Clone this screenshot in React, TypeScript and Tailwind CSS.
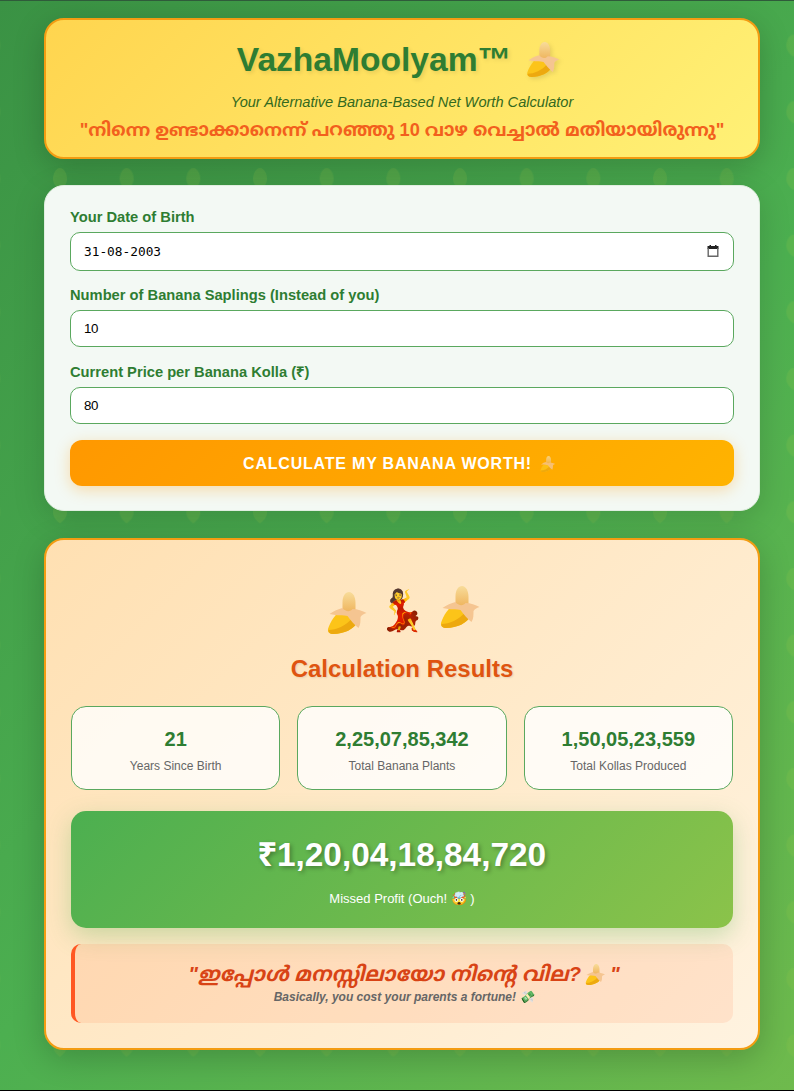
const sans = "font-['Liberation_Sans','Noto_Sans_Malayalam',Arial,sans-serif]";

function Banana({ className }: { className: string }) {
  return (
    <svg className={className} viewBox="0 0 40 42" aria-hidden="true">
      <defs>
        <linearGradient id="fruit" x1="0" y1="0" x2="0" y2="1">
          <stop offset="0%" stopColor="#f8dc9a" />
          <stop offset="100%" stopColor="#eeb158" />
        </linearGradient>
      </defs>
      <path d="M15 10C15 4 18 0 21.5 0C25.5 0 28 5 28 11V22H15Z" fill="url(#fruit)" />
      <path d="M0.5 37C3 29 8 22 14 18L30 30C27 37 16 42 6 42C2 42 0 40 0.5 37Z" fill="#fcc419" />
      <path d="M1 38C9 38 18 34 25 26L30 30C27 37 16 42 6 42C2 42 0.5 40 1 38Z" fill="#eda90f" />
      <path d="M2 22C6 19 11 17 15 16C18 20 23 20 25 17C30 17 35 19 39 21C36 22 34 23 33 25C33 29 33 33 31 36C27 33 23 28 20 24C16 23 10 24 2 22Z" fill="#f5c591" />
    </svg>
  );
}

function Field({
  label,
  value,
  className,
  children,
}: {
  label: string;
  value: string;
  className: string;
  children?: React.ReactNode;
}) {
  return (
    <div>
      <label className="mb-[6px] block text-[14.7px] leading-[17px] font-bold text-[#2e7d32]">{label}</label>
      <div className="relative">
        <input
          type="text"
          readOnly
          value={value}
          className={`block w-full rounded-[10px] border border-[#5aa85e] bg-white px-[13px] text-black outline-none ${className}`}
        />
        {children}
      </div>
    </div>
  );
}

function Stat({ value, label }: { value: string; label: string }) {
  return (
    <div className="flex h-[84px] flex-col items-center justify-center rounded-[15px] border border-[#5aa85e] bg-white/80 pt-[4px]">
      <div className="text-[20px] leading-[23px] font-bold text-[#2e7d32]">{value}</div>
      <div className="mt-[8px] text-[12px] leading-[14px] text-[#666]">{label}</div>
    </div>
  );
}

export default function App() {
  return (
    <div
      className={`${sans} relative h-[1091px] overflow-hidden border-t border-b border-t-[#2f5b3a] border-b-black bg-[linear-gradient(135deg,#3a9244_0%,#4caf50_55%,#8bc34a_137%)]`}
    >
      <svg className="absolute inset-0 h-full w-full" aria-hidden="true">
        <defs>
          <pattern id="leaf" x="53" y="167" width="66.67" height="66.67" patternUnits="userSpaceOnUse">
            <path d="M7 0C11 0 14 6 14 11C14 16 10 20 7 22C4 20 0 16 0 11C0 6 3 0 7 0Z" fill="#8bc34a" fillOpacity="0.22" />
          </pattern>
        </defs>
        <rect width="100%" height="100%" fill="url(#leaf)" />
      </svg>

      <div className="relative ml-[44px] flex w-[716px] flex-col pt-[17px]">
        <header className="flex h-[141px] flex-col items-center rounded-[20px] border-2 border-[#f39c12] bg-[linear-gradient(135deg,#ffd54f,#fff176)] pt-[19px] shadow-[0_8px_32px_rgba(0,0,0,0.2)]">
          <h1 className="flex items-center gap-[15px] pr-[6px] text-[33.6px] leading-[41px] font-bold text-[#2e7d32] [text-shadow:2px_2px_4px_rgba(0,0,0,0.1)]">
            VazhaMoolyam™
            <Banana className="h-[35px] w-[35px] drop-shadow-[2px_2px_2px_rgba(0,0,0,0.1)]" />
          </h1>
          <p className="mt-[14px] text-[14.6px] leading-[17px] text-[#33691e] italic">Your Alternative Banana-Based Net Worth Calculator</p>
          <p className="mt-[7px] text-[18.2px] leading-[24px] font-bold text-[#f2601d]">"നിന്നെ ഉണ്ടാക്കാനെന്ന് പറഞ്ഞു 10 വാഴ വെച്ചാൽ മതിയായിരുന്നു"</p>
        </header>

        <section className="mt-[26px] h-[326px] rounded-[20px] border border-[#e0eee0] bg-[#f3f9f4] px-[25px] pt-[23px] shadow-[0_8px_32px_rgba(0,0,0,0.15)]">
          <Field
            label="Your Date of Birth"
            value="31-08-2003"
            className="h-[39px] font-['DejaVu_Sans_Mono',monospace] text-[12.8px]"
          >
            <svg className="absolute top-[13px] right-[15px] h-[12px] w-[12px]" viewBox="0 0 12 12" aria-hidden="true">
              <path d="M2.5 0H4V1H8V0H9.5V1H11.5V4H0.5V1H2.5Z" fill="#222" />
              <path d="M1.2 3V11.3H10.8V3" fill="none" stroke="#666" strokeWidth="1.4" />
            </svg>
          </Field>
          <div className="mt-[16px]">
            <Field label="Number of Banana Saplings (Instead of you)" value="10" className="h-[37px] text-[13.3px] tracking-[-0.4px]" />
          </div>
          <div className="mt-[17px]">
            <Field label="Current Price per Banana Kolla (₹)" value="80" className="h-[37px] text-[13.3px] tracking-[-0.4px]" />
          </div>
          <button
            type="button"
            className="mt-[16px] flex h-[46px] w-full items-center justify-center gap-[8px] rounded-[12px] bg-[linear-gradient(135deg,#ff9800,#ffb300)] pt-[2px] pr-[5px] text-[16px] font-bold tracking-[0.8px] text-white uppercase shadow-[0_4px_15px_rgba(255,152,0,0.3)]"
          >
            Calculate my banana worth!
            <Banana className="h-[16px] w-[16px] opacity-80" />
          </button>
        </section>

        <section className="mt-[27px] h-[512px] rounded-[20px] border-2 border-[#f39c12] bg-[linear-gradient(135deg,#ffe0b2,#fff3e0)] px-[25px] pt-[46px] shadow-[0_8px_32px_rgba(0,0,0,0.2)]">
          <div className="flex h-[48px] items-center justify-center gap-[11px] text-[40px] leading-[48px]">
            <Banana className="h-[42px] w-[41px] translate-x-[2px] translate-y-[3px]" />
            <span>💃</span>
            <Banana className="h-[42px] w-[41px] translate-x-[2px] -translate-y-[3px]" />
          </div>
          <h2 className="mt-[21px] text-center text-[24px] leading-[28px] font-bold text-[#df5410] [text-shadow:1px_1px_2px_rgba(0,0,0,0.1)]">Calculation Results</h2>
          <div className="mt-[23px] grid grid-cols-3 gap-[17px]">
            <Stat value="21" label="Years Since Birth" />
            <Stat value="2,25,07,85,342" label="Total Banana Plants" />
            <Stat value="1,50,05,23,559" label="Total Kollas Produced" />
          </div>
          <div className="mt-[21px] flex h-[117px] flex-col items-center rounded-[15px] bg-[linear-gradient(135deg,#4caf50,#8bc34a)] pt-[22px] text-white shadow-[0_8px_25px_rgba(76,175,80,0.3)]">
            <div className="text-[33.4px] leading-[44px] font-bold [text-shadow:2px_2px_4px_rgba(0,0,0,0.3)]">₹1,20,04,18,84,720</div>
            <div className="mt-[14px] text-[13px] leading-[16px]">Missed Profit (Ouch! 🤯 )</div>
          </div>
          <div className="mt-[16px] flex h-[79px] flex-col items-center rounded-[10px] border-l-4 border-[#ff5722] bg-[#ff5722]/10 pt-[18px] italic">
            <div className="flex items-center text-[20.5px] leading-[24px] font-bold text-[#d84315]">
              "ഇപ്പോൾ മനസ്സിലായോ നിന്റെ വില?
              <Banana className="mx-[4px] h-[21px] w-[21px]" />"
            </div>
            <div className="mt-[4px] text-[12px] leading-[14px] font-bold text-[#666]">Basically, you cost your parents a fortune! 💸</div>
          </div>
        </section>
      </div>
    </div>
  );
}
